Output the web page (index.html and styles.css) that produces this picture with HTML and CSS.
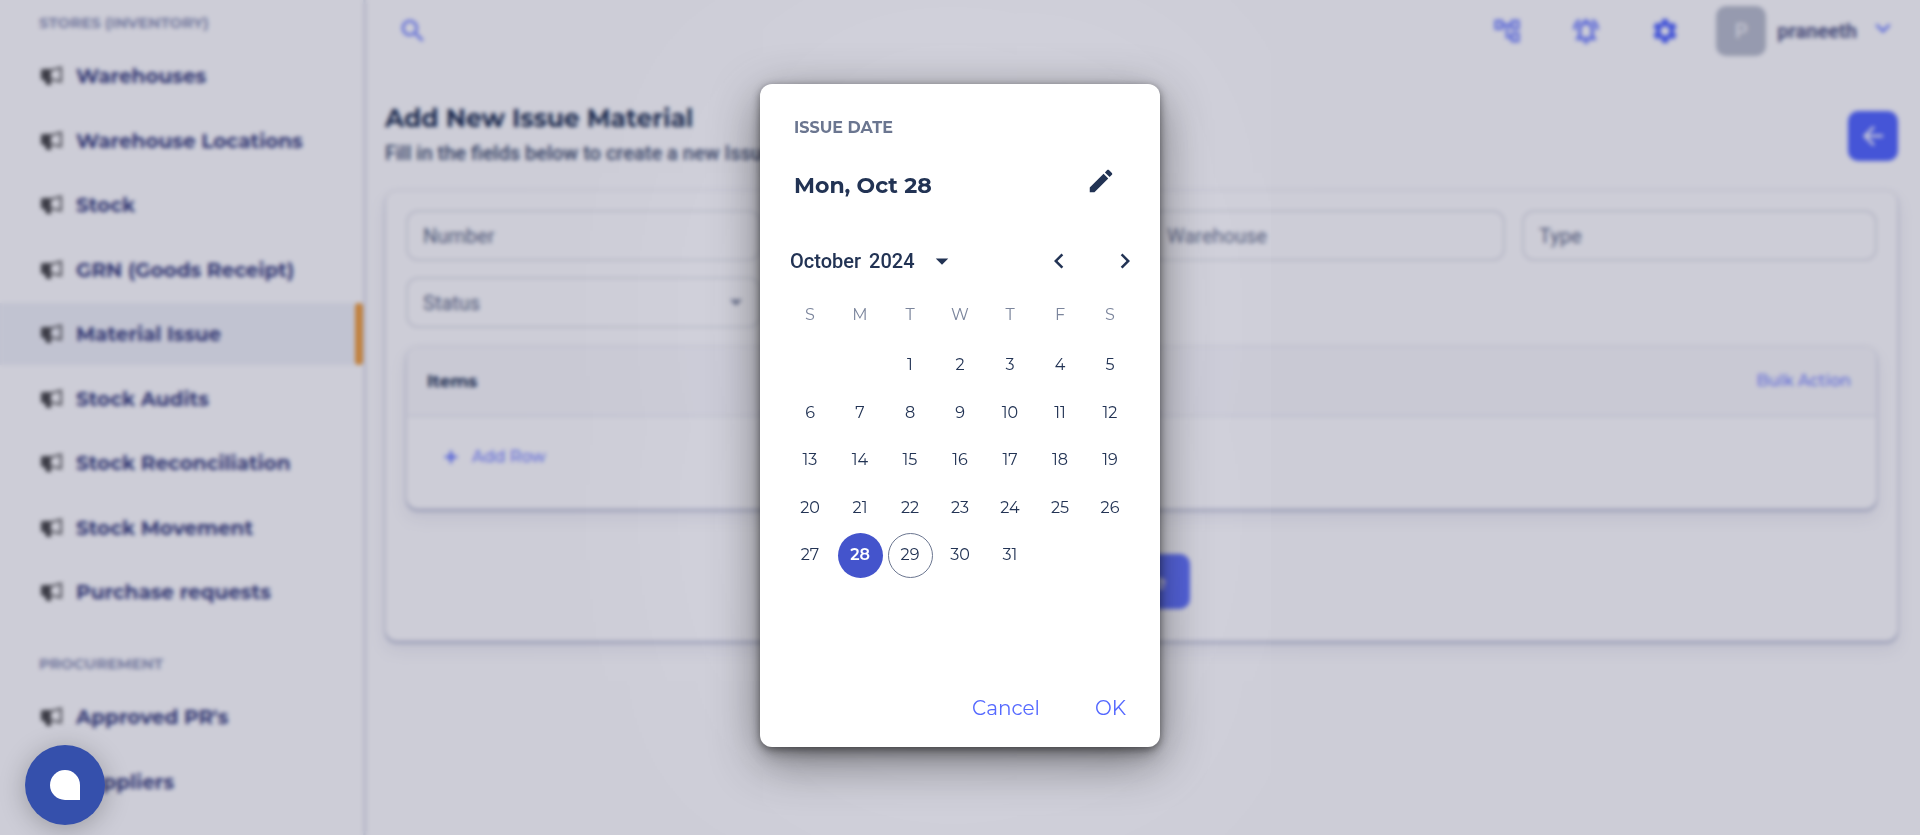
FILE: index.html
```
<!DOCTYPE html>
<html lang="en">
<head>
<meta charset="utf-8">
<meta name="viewport" content="width=device-width, initial-scale=1">
<title>Add New Issue Material</title>
<link rel="stylesheet" href="styles.css">
</head>
<body>
<svg width="0" height="0" class="sprite" aria-hidden="true">
  <symbol id="horn" viewBox="0 0 24 24">
    <path d="M1 6.500Q1 5 3 5H11V16H10.500L11.500 20Q11.500 21 10 21H7.500Q6.500 21 6 20L4.500 16H3Q1 16 1 14.500Z"/>
    <path d="M11 6.200 21 3.500V17.500L11 15.200" fill="none" stroke="currentColor" stroke-width="2"/>
  </symbol>
</svg>
<div class="app">
  <aside class="sidebar">
    <nav class="nav" aria-label="Main">
      <section class="group">
        <h2 class="group-title">STORES (INVENTORY)</h2>
        <ul class="menu">
          <li><a class="item" href="#"><svg class="horn"><use href="#horn"/></svg>Warehouses</a></li>
          <li><a class="item" href="#"><svg class="horn"><use href="#horn"/></svg>Warehouse Locations</a></li>
          <li><a class="item" href="#"><svg class="horn"><use href="#horn"/></svg>Stock</a></li>
          <li><a class="item" href="#"><svg class="horn"><use href="#horn"/></svg>GRN (Goods Receipt)</a></li>
          <li><a class="item active" href="#" aria-current="page"><svg class="horn"><use href="#horn"/></svg>Material Issue</a></li>
          <li><a class="item" href="#"><svg class="horn"><use href="#horn"/></svg>Stock Audits</a></li>
          <li><a class="item" href="#"><svg class="horn"><use href="#horn"/></svg>Stock Reconciliation</a></li>
          <li><a class="item" href="#"><svg class="horn"><use href="#horn"/></svg>Stock Movement</a></li>
          <li><a class="item" href="#"><svg class="horn"><use href="#horn"/></svg>Purchase requests</a></li>
        </ul>
      </section>
      <section class="group">
        <h2 class="group-title">PROCUREMENT</h2>
        <ul class="menu">
          <li><a class="item" href="#"><svg class="horn"><use href="#horn"/></svg>Approved PR's</a></li>
          <li><a class="item" href="#"><svg class="horn"><use href="#horn"/></svg>Suppliers</a></li>
        </ul>
      </section>
    </nav>
  </aside>
  <div class="main">
    <header class="topbar">
      <button class="icon-btn" aria-label="Search"><svg class="icon soft" viewBox="0 0 24 24"><path d="M15.500 14h-.79l-.28-.27C15.410 12.590 16 11.110 16 9.500 16 5.910 13.090 3 9.500 3S3 5.910 3 9.500 5.910 16 9.500 16c1.610 0 3.090-.59 4.230-1.570l.27.28v.79l5 4.990L20.490 19l-4.990-5zm-6 0C7.010 14 5 11.990 5 9.500S7.010 5 9.500 5 14 7.010 14 9.500 11.990 14 9.500 14z"/></svg></button>
      <div class="tools">
        <button class="icon-btn" aria-label="Workflow"><svg class="icon soft" viewBox="0 0 24 24"><path d="M22 11V3h-7v3H9V3H2v8h7V8h2v10h4v3h7v-8h-7v3h-2V8h2v3zM7 9H4V5h3zm10 6h3v4h-3zm0-10h3v4h-3z"/></svg></button>
        <button class="icon-btn" aria-label="Notifications"><svg class="icon soft" viewBox="0 0 24 24"><path stroke="currentColor" stroke-width=".6" d="M7.580 4.080 6.150 2.650C3.750 4.480 2.170 7.300 2.030 10.500h2c.15-2.650 1.510-4.970 3.550-6.420zm12.390 6.420h2c-.15-3.200-1.730-6.020-4.120-7.850l-1.420 1.430c2.020 1.450 3.390 3.770 3.540 6.420zM18 11c0-3.070-1.640-5.640-4.500-6.320V4c0-.83-.67-1.500-1.500-1.500s-1.500.67-1.500 1.500v.68C7.630 5.360 6 7.920 6 11v5l-2 2v1h16v-1l-2-2zm-2 6H8v-6c0-2.480 1.510-4.500 4-4.500s4 2.020 4 4.500zm-4 5c1.100 0 2-.9 2-2h-4c0 1.100.9 2 2 2z"/></svg></button>
        <button class="icon-btn" aria-label="Settings"><svg class="icon" viewBox="0 0 24 24"><path d="M19.140 12.940c.04-.3.060-.61.060-.94 0-.32-.02-.64-.07-.94l2.030-1.580c.18-.14.230-.41.120-.61l-1.920-3.320c-.12-.22-.37-.29-.59-.22l-2.390.96c-.5-.38-1.030-.7-1.620-.94l-.36-2.540c-.04-.24-.24-.41-.48-.41h-3.840c-.24 0-.43.170-.47.410l-.36 2.540c-.59.240-1.130.570-1.620.940l-2.390-.96c-.22-.08-.47 0-.59.220L2.740 8.870c-.12.210-.08.470.120.610l2.030 1.580c-.05.300-.09.630-.09.940s.020.640.070.940l-2.030 1.580c-.18.140-.23.410-.12.610l1.920 3.320c.12.220.37.290.59.220l2.390-.96c.5.380 1.030.7 1.620.94l.36 2.540c.05.240.24.410.48.410h3.840c.24 0 .44-.17.470-.41l.36-2.540c.59-.24 1.130-.56 1.620-.94l2.390.96c.22.080.47 0 .59-.22l1.920-3.320c.12-.22.070-.47-.12-.61zM12 15.600c-1.980 0-3.600-1.620-3.600-3.600s1.620-3.600 3.600-3.600 3.600 1.620 3.600 3.600-1.620 3.600-3.600 3.600z"/></svg></button>
      </div>
      <button class="user">
        <span class="avatar">P</span>
        <span class="user-name">praneeth</span>
        <svg class="icon chevron" viewBox="0 0 24 24"><path d="M7.410 8.590 12 13.170l4.590-4.580L18 10l-6 6-6-6z"/></svg>
      </button>
    </header>
    <main class="content">
      <div class="heading">
        <div>
          <h1 class="title">Add New Issue Material</h1>
          <p class="subtitle">Fill in the fields below to create a new Issue Material</p>
        </div>
        <button class="back" aria-label="Back"><svg class="icon" viewBox="0 0 24 24"><path d="M20 11H7.830l5.590-5.590L12 4l-8 8 8 8 1.410-1.410L7.830 13H20z"/></svg></button>
      </div>
      <form class="card">
        <div class="fields">
          <input class="field" aria-label="Number" placeholder="Number">
          <input class="field" aria-label="Issue Date" placeholder="Issue Date">
          <input class="field" aria-label="Warehouse" placeholder="Warehouse">
          <input class="field" aria-label="Type" placeholder="Type">
          <div class="select-wrap">
            <select class="field" aria-label="Status"><option>Status</option></select>
            <svg class="icon caret" viewBox="0 0 24 24"><path d="m7 10 5 5 5-5z"/></svg>
          </div>
        </div>
        <section class="items">
          <div class="items-head">
            <h2 class="items-title">Items</h2>
            <button type="button" class="link">Bulk Action</button>
          </div>
          <div class="items-body">
            <button type="button" class="link add"><svg class="plus" viewBox="0 0 24 24"><path d="M19 13h-6v6h-2v-6H5v-2h6V5h2v6h6z"/></svg>Add Row</button>
          </div>
        </section>
        <button type="button" class="save">Save</button>
      </form>
    </main>
  </div>
</div>
<div class="scrim">
  <div class="dialog" role="dialog" aria-modal="true" aria-labelledby="dlg-label">
    <div class="dlg-head">
      <p class="overline" id="dlg-label">ISSUE DATE</p>
      <div class="date-row">
        <p class="date">Mon, Oct 28</p>
        <button class="icon-btn ink" aria-label="Edit date"><svg class="icon" viewBox="0 0 24 24"><path d="M3 17.250V21h3.750L17.810 9.940l-3.750-3.750L3 17.250zM20.710 7.040c.39-.39.390-1.020 0-1.410l-2.340-2.340c-.39-.39-1.020-.39-1.410 0l-1.830 1.830 3.750 3.750 1.830-1.830z"/></svg></button>
      </div>
    </div>
    <div class="month-row">
      <button class="month"><span>October</span><span>2024</span><svg class="icon" viewBox="0 0 24 24"><path d="m7 10 5 5 5-5z"/></svg></button>
      <div class="arrows">
        <button class="icon-btn ink" aria-label="Previous month"><svg class="icon" viewBox="0 0 24 24"><path d="M15.410 7.410 14 6l-6 6 6 6 1.410-1.410L10.830 12z"/></svg></button>
        <button class="icon-btn ink" aria-label="Next month"><svg class="icon" viewBox="0 0 24 24"><path d="M10 6 8.590 7.410 13.170 12l-4.580 4.590L10 18l6-6z"/></svg></button>
      </div>
    </div>
    <table class="calendar">
      <thead><tr><th>S</th><th>M</th><th>T</th><th>W</th><th>T</th><th>F</th><th>S</th></tr></thead>
      <tbody>
        <tr><td></td><td></td><td><button class="day">1</button></td><td><button class="day">2</button></td><td><button class="day">3</button></td><td><button class="day">4</button></td><td><button class="day">5</button></td></tr>
        <tr><td><button class="day">6</button></td><td><button class="day">7</button></td><td><button class="day">8</button></td><td><button class="day">9</button></td><td><button class="day">10</button></td><td><button class="day">11</button></td><td><button class="day">12</button></td></tr>
        <tr><td><button class="day">13</button></td><td><button class="day">14</button></td><td><button class="day">15</button></td><td><button class="day">16</button></td><td><button class="day">17</button></td><td><button class="day">18</button></td><td><button class="day">19</button></td></tr>
        <tr><td><button class="day">20</button></td><td><button class="day">21</button></td><td><button class="day">22</button></td><td><button class="day">23</button></td><td><button class="day">24</button></td><td><button class="day">25</button></td><td><button class="day">26</button></td></tr>
        <tr><td><button class="day">27</button></td><td><button class="day selected" aria-pressed="true">28</button></td><td><button class="day today">29</button></td><td><button class="day">30</button></td><td><button class="day">31</button></td><td></td><td></td></tr>
      </tbody>
    </table>
    <div class="actions">
      <button class="action">Cancel</button>
      <button class="action">OK</button>
    </div>
  </div>
</div>
<button class="chat" aria-label="Open chat"><span class="drop"></span></button>
</body>
</html>
```
FILE: styles.css
```
:root {
  --head: Montserrat, Inter, sans-serif;
  --body: Roboto, sans-serif;
  --ink: #223354;
  --blue: #5569ff;
}
* { box-sizing: border-box; }
body { margin: 0; font-family: var(--body); color: var(--ink); background: #fff; overflow: hidden; }
h1, h2, p, ul { margin: 0; padding: 0; }
ul { list-style: none; }
button { font: inherit; color: inherit; background: none; border: 0; padding: 0; cursor: pointer; }
.sprite { position: absolute; }
.icon { width: 30px; height: 30px; fill: currentColor; display: block; flex: none; }

.app { display: flex; height: 100vh; overflow: hidden; }
.sidebar { width: 364px; flex: none; overflow: hidden; border-right: 1px solid #eceef4; box-shadow: 1px 0 3px rgba(100, 110, 160, .4); }
.group { margin-bottom: 18px; }
.group-title { height: 45px; padding-left: 39px; font: 700 15px/45px var(--head); color: #9096b8; }
.menu li { margin-bottom: 2px; }
.menu li:nth-child(odd) { margin-bottom: 3px; }
.menu li:last-child { margin-bottom: 0; }
.item { display: flex; align-items: center; gap: 12px; height: 62px; padding-left: 40px; font: 700 20px/24px var(--head); color: #3b4280; text-decoration: none; }
.item.active { background: #f1f3f8; }
.item.active::after { content: ""; width: 8px; height: 62px; margin-left: auto; border-radius: 4px; background: #f0a040; }
.horn { width: 24px; height: 24px; color: #5c5c5c; fill: #4b4b4b; }

.main { flex: 1; min-width: 0; padding: 0 22px 0 21px; }
.topbar { display: flex; align-items: center; height: 61px; padding-left: 13px; }
.icon-btn { color: var(--blue); display: grid; place-items: center; }
.soft { opacity: .85; }
.tools { display: flex; gap: 49px; margin-left: auto; }
.user { display: flex; align-items: center; margin-left: 36px; }
.avatar { width: 50px; height: 50px; border-radius: 10px; background: #bbc0cd; color: #f4f5f8; display: grid; place-items: center; font: 500 20px/24px var(--body); }
.user-name { margin-left: 11px; font-weight: 700; font-size: 20px; line-height: 24px; color: #555b88; }
.chevron { margin: 0 0 6px 11px; color: var(--blue); opacity: .85; }

.heading { display: flex; align-items: center; justify-content: space-between; height: 129px; padding-top: 20px; }
.heading > div { padding-bottom: 7px; }
.title { font: 700 25px/36px var(--head); }
.subtitle { font-size: 20px; line-height: 24px; font-weight: 500; margin-top: 5px; color: #3f4e6e; }
.heading .back { width: 50px; height: 50px; border-radius: 10px; background: var(--blue); color: #fff; display: grid; place-items: center; }
.card, .items { border-radius: 12px; background: #fff; box-shadow: 0 2px 3px rgba(140, 150, 185, .6), 0 9px 16px rgba(159, 162, 191, .18); border: 1px solid #eaeaf0; }
.card { padding: 19px 20px 31px; }
.fields { display: grid; grid-template-columns: repeat(4, 1fr); gap: 16px 17px; }
.field { width: 100%; height: 51px; border: 2px solid #e4e6eb; border-radius: 12px; background: #fff; padding: 0 15px; font: 400 20px/24px var(--body); color: #5f6b87; appearance: none; }
.field::placeholder { color: #5f6b87; opacity: 1; }
.select-wrap { position: relative; }
.caret { position: absolute; right: 10px; top: 10px; color: #76809a; }
.items { margin-top: 18px; overflow: hidden; }
.items-head { display: flex; align-items: center; justify-content: space-between; height: 70px; padding: 0 25px 0 20px; background: #fafafc; border-bottom: 2px solid #eeeff4; }
.items-title { font: 700 17px/24px var(--head); }
.link { display: flex; align-items: center; color: #7785ff; font: 500 16px/24px var(--head); }
.items-body { height: 91px; padding: 28px 0 0 34px; }
.add { gap: 11px; }
.plus { width: 20px; height: 20px; fill: #5569ff; stroke: #5569ff; }
.save { display: block; margin: 45px auto 0; height: 55px; padding: 0 24px; border-radius: 10px; background: var(--blue); color: #fff; font: 600 20px/24px var(--head); }

.scrim { position: fixed; inset: 0; display: flex; align-items: center; justify-content: center; padding-bottom: 4px; background: rgba(7, 7, 55, .2); backdrop-filter: blur(2px); }
.dialog { width: 400px; border-radius: 12px; background: #fff; padding: 31px 10px 10px; box-shadow: 0 2px 8px rgba(0, 0, 0, .45), 0 14px 50px rgba(0, 0, 0, .46), 0 12px 16px -4px rgba(0, 0, 0, .2), 0 0 280px rgba(255, 255, 255, .3); }
.dlg-head { padding: 0 34px 0 24px; }
.overline { font: 700 16px/26px var(--head); color: #6b7690; }
.date-row { display: flex; align-items: center; justify-content: space-between; height: 80px; }
.date { font: 700 22px/30px var(--head); padding-top: 10px; }
.ink { color: var(--ink); }
.month-row { display: flex; align-items: center; justify-content: space-between; height: 60px; margin-top: 10px; padding: 0 10px 0 20px; }
.month { display: flex; align-items: center; gap: 8px; font: 500 20px/24px var(--body); }
.month .icon { margin-left: 4px; }
.arrows { display: flex; gap: 36px; }
.calendar { width: 350px; margin: 0 auto; border-collapse: collapse; table-layout: fixed; }
.calendar th { height: 50px; padding: 0 0 2px; font: 400 16px/20px var(--head); color: #7b859c; }
.calendar td { height: 48px; padding: 0; text-align: center; }
.calendar tbody tr:nth-child(even) td { height: 47px; }
.day { display: block; margin: 0 auto; width: 45px; height: 45px; border-radius: 50%; font: 400 16px/20px var(--head); }
.day.selected { background: #4454cc; color: #fff; font-weight: 600; }
.day.today { border: 1px solid #6b7690; }
.actions { display: flex; justify-content: flex-end; gap: 39px; margin-top: 104px; padding: 0 16px 0 0; height: 54px; }
.action { font: 400 20px/50px var(--head); color: var(--blue); padding: 0 8px; height: 50px; }
.chat { position: fixed; left: 25px; bottom: 10px; width: 80px; height: 80px; border-radius: 50%; background: #3550ac; display: grid; place-items: center; box-shadow: 0 4px 26px rgba(0, 0, 0, .25); }
.drop { width: 30px; height: 30px; background: #fff; border-radius: 50% 50% 0 50%; }
```
